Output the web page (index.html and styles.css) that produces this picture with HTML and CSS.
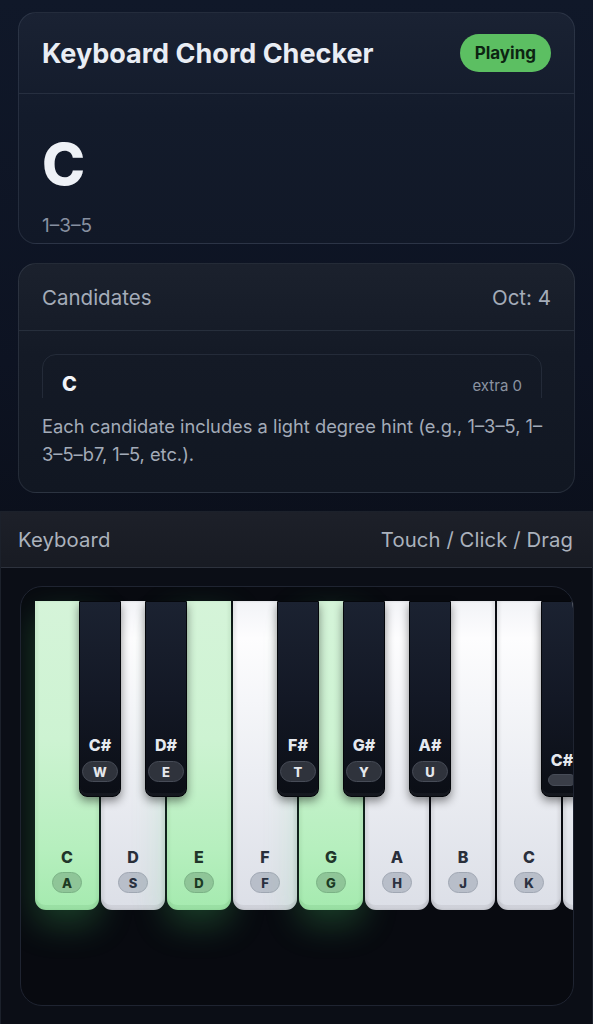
FILE: index.html
```html
<!DOCTYPE html>
<html lang="en">
<head>
<meta charset="utf-8">
<title>Keyboard Chord Checker</title>
<link rel="stylesheet" href="styles.css">
</head>
<body>
<div class="app">
  <section class="card chord-card">
    <header class="card-head">
      <h1 class="title">Keyboard Chord Checker</h1>
      <span class="status">Playing</span>
    </header>
    <div class="chord-body">
      <div class="chord-name">C</div>
      <div class="chord-degrees">1–3–5</div>
    </div>
  </section>

  <section class="card cand-card">
    <header class="card-head cand-head">
      <span>Candidates</span>
      <span>Oct: 4</span>
    </header>
    <div class="cand-body">
      <div class="cand-list">
        <div class="cand-item">
          <span class="cand-name">C</span>
          <span class="cand-extra">extra 0</span>
        </div>
      </div>
      <p class="cand-note">Each candidate includes a light degree hint (e.g., 1–3–5, 1–3–5–b7, 1–5, etc.).</p>
    </div>
  </section>

  <section class="kb-panel">
    <header class="kb-head">
      <span>Keyboard</span>
      <span>Touch / Click / Drag</span>
    </header>
    <div class="kb-body">
      <div class="kb-frame">
        <div class="keys">
          <div class="wkey active"><span class="note">C</span><span class="kbd">A</span></div>
          <div class="wkey"><span class="note">D</span><span class="kbd">S</span></div>
          <div class="wkey active"><span class="note">E</span><span class="kbd">D</span></div>
          <div class="wkey"><span class="note">F</span><span class="kbd">F</span></div>
          <div class="wkey active"><span class="note">G</span><span class="kbd">G</span></div>
          <div class="wkey"><span class="note">A</span><span class="kbd">H</span></div>
          <div class="wkey"><span class="note">B</span><span class="kbd">J</span></div>
          <div class="wkey"><span class="note">C</span><span class="kbd">K</span></div>
          <div class="wkey"></div>

          <div class="bkey" style="left:44px"><span class="note">C#</span><span class="kbd">W</span></div>
          <div class="bkey" style="left:110px"><span class="note">D#</span><span class="kbd">E</span></div>
          <div class="bkey" style="left:242px"><span class="note">F#</span><span class="kbd">T</span></div>
          <div class="bkey" style="left:308px"><span class="note">G#</span><span class="kbd">Y</span></div>
          <div class="bkey" style="left:374px"><span class="note">A#</span><span class="kbd">U</span></div>
          <div class="bkey" style="left:506px"><span class="note">C#</span><span class="kbd empty"></span></div>
        </div>
      </div>
    </div>
  </section>
</div>
</body>
</html>
```

FILE: styles.css
```css
* { box-sizing: border-box; }

html, body {
  margin: 0;
  padding: 0;
}

body {
  font-family: Inter, "Noto Sans", "Liberation Sans", sans-serif;
  background: linear-gradient(180deg, #101829 0%, #0d1322 35%, #0a0e18 60%, #0b0e16 100%);
  color: #e8ecf3;
  min-height: 1024px;
  overflow: hidden;
}

.app {
  padding-top: 12px;
}

.card {
  margin: 0 18px;
  border-radius: 18px;
  border: 1px solid rgba(148, 163, 184, 0.15);
  background: linear-gradient(180deg, #1a2233 0%, #131b2b 45%, #111827 100%);
  overflow: hidden;
}

.card + .card {
  margin-top: 19px;
}

.card-head {
  height: 81px;
  padding: 0 23px;
  display: flex;
  align-items: center;
  justify-content: space-between;
  border-bottom: 1px solid rgba(148, 163, 184, 0.14);
}

.title {
  margin: 0;
  font-size: 27px;
  font-weight: 700;
  color: #e9edf4;
}

.status {
  display: inline-flex;
  align-items: center;
  height: 38px;
  padding: 0 15px;
  border-radius: 19px;
  background: #5cbf62;
  color: #0c2412;
  font-size: 17px;
  font-weight: 700;
}

.chord-body {
  height: 149px;
  padding: 41px 23px 0;
}

.chord-name {
  font-size: 58px;
  line-height: 58px;
  font-weight: 800;
  color: #eef1f6;
}

.chord-degrees {
  margin-top: 23px;
  font-size: 19px;
  line-height: 20px;
  color: #8790a0;
}

.cand-card {
  background: linear-gradient(180deg, #1b212d 0%, #141a26 40%, #111722 100%);
}

.cand-head {
  height: 67px;
  font-size: 20.5px;
  color: #a4acb9;
}

.cand-body {
  padding: 23px 23px 24px;
}

.cand-list {
  height: 44px;
  margin-right: 9px;
  overflow: hidden;
}

.cand-item {
  height: 70px;
  border: 1px solid rgba(148, 163, 184, 0.13);
  border-radius: 14px;
  padding: 18px 19px 0;
  display: flex;
  justify-content: space-between;
  align-items: baseline;
}

.cand-name {
  font-size: 20px;
  line-height: 22px;
  font-weight: 800;
  color: #f1f4f8;
}

.cand-extra {
  font-size: 15px;
  color: #8b93a1;
}

.cand-note {
  margin: 14px 0 0;
  font-size: 18.3px;
  line-height: 28px;
  color: #a3abb8;
}

.kb-panel {
  margin-top: 18px;
  border: 1px solid rgba(148, 163, 184, 0.13);
  border-bottom: none;
  background: #0b0e16;
}

.kb-head {
  height: 56px;
  padding: 0 19px 0 17px;
  display: flex;
  align-items: center;
  justify-content: space-between;
  background: linear-gradient(180deg, #1d2029 0%, #181b23 100%);
  border-bottom: 1px solid rgba(148, 163, 184, 0.14);
  font-size: 20.3px;
  color: #abb2bd;
  letter-spacing: 0.1px;
}

.kb-body {
  padding: 18px 18px 30px 19px;
}

.kb-frame {
  height: 420px;
  border: 1px solid #1f2431;
  border-radius: 22px;
  background: #080a10;
  padding: 14px 0 0 14px;
  overflow: hidden;
}

.keys {
  position: relative;
  display: flex;
  gap: 2px;
  height: 309px;
}

.wkey {
  flex: 0 0 64px;
  height: 309px;
  border-radius: 0 0 11px 11px;
  background: linear-gradient(180deg, #f2f3f7 0%, #fdfdfe 12%, #eceef3 55%, #dcdfe7 100%);
  box-shadow: inset 3px 0 3px rgba(0, 0, 0, 0.07), inset -3px 0 3px rgba(0, 0, 0, 0.07), inset 0 -5px 0 rgba(0, 0, 0, 0.06);
  display: flex;
  flex-direction: column;
  align-items: center;
  justify-content: flex-end;
  padding-bottom: 17px;
}

.wkey.active {
  background: linear-gradient(180deg, #d5f4d9 0%, #cdf3d2 45%, #b6efbe 80%, #a5eaaf 100%);
  box-shadow: inset 3px 0 3px rgba(0, 60, 10, 0.05), inset -3px 0 3px rgba(0, 60, 10, 0.05), inset 0 -5px 0 rgba(0, 80, 20, 0.07), 0 14px 34px rgba(80, 220, 110, 0.25);
}

.wkey .note {
  font-size: 16px;
  line-height: 16px;
  font-weight: 800;
  color: #2a2f3b;
  margin-bottom: 7px;
}

.wkey.active .note {
  color: #21352a;
}

.kbd {
  display: inline-flex;
  align-items: center;
  justify-content: center;
  font-size: 13px;
  font-weight: 800;
}

.wkey .kbd {
  width: 30px;
  height: 21px;
  border-radius: 11px;
  background: #b8bec9;
  border: 1px solid #a0a7b3;
  color: #2b3140;
}

.wkey.active .kbd {
  background: #8fc598;
  border-color: #7ab285;
  color: #1c3a23;
}

.bkey {
  position: absolute;
  top: 0;
  width: 42px;
  height: 196px;
  border-radius: 0 0 8px 8px;
  background: linear-gradient(180deg, #1b2231 0%, #131825 50%, #0b0e15 100%);
  border: 1px solid #05070b;
  box-shadow: 0 4px 10px rgba(0, 0, 0, 0.45), inset 0 -3px 0 rgba(255, 255, 255, 0.04);
  display: flex;
  flex-direction: column;
  align-items: center;
  justify-content: flex-end;
  padding-bottom: 14px;
  z-index: 2;
}

.bkey .note {
  font-size: 16px;
  line-height: 16px;
  font-weight: 800;
  color: #e6e9ef;
  margin-bottom: 8px;
}

.bkey .kbd {
  width: 36px;
  height: 21px;
  border-radius: 11px;
  background: #2f333c;
  border: 1px solid #474c57;
  color: #e5e7eb;
}

.bkey .kbd.empty {
  width: 28px;
  height: 12px;
  border-radius: 6px;
  background: #3a3e48;
  margin-bottom: -4px;
}

.bkey .note:has(+ .empty) {
  margin-bottom: 6px;
}
```
